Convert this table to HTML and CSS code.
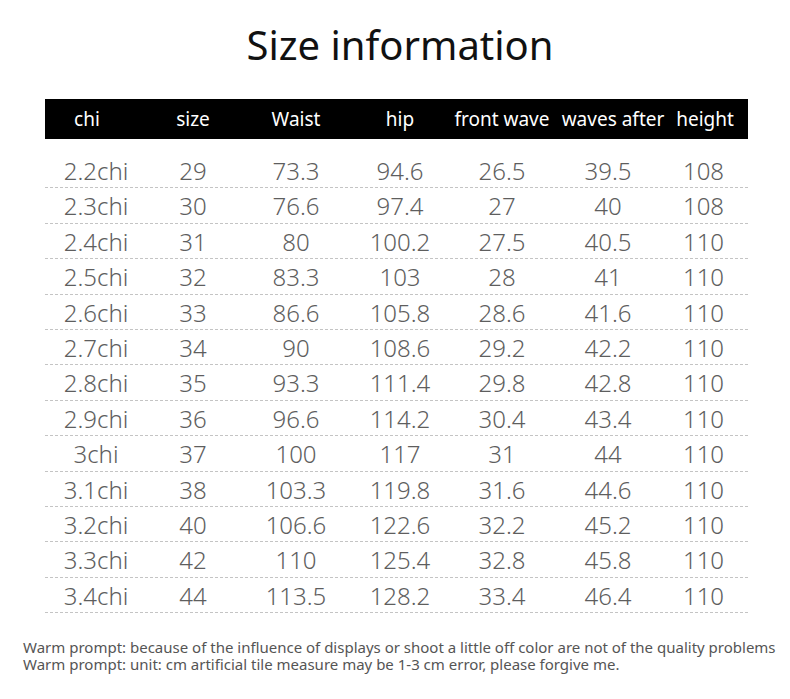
FILE: index.html
```html
<!DOCTYPE html>
<html>
<head>
<meta charset="utf-8">
<link rel="stylesheet" href="styles.css">
</head>
<body>
<div class="page">
  <h1 class="title">Size information</h1>
  <div class="table">
    <div class="head">
      <div class="hc h-chi">chi</div>
      <div class="hc">size</div>
      <div class="hc">Waist</div>
      <div class="hc">hip</div>
      <div class="hc">front wave</div>
      <div class="hc h-after">waves after</div>
      <div class="hc h-height">height</div>
    </div>
    <div class="rows">
      <div class="row"><div>2.2chi</div><div>29</div><div>73.3</div><div>94.6</div><div>26.5</div><div>39.5</div><div>108</div></div>
      <div class="row"><div>2.3chi</div><div>30</div><div>76.6</div><div>97.4</div><div>27</div><div>40</div><div>108</div></div>
      <div class="row"><div>2.4chi</div><div>31</div><div>80</div><div>100.2</div><div>27.5</div><div>40.5</div><div>110</div></div>
      <div class="row"><div>2.5chi</div><div>32</div><div>83.3</div><div>103</div><div>28</div><div>41</div><div>110</div></div>
      <div class="row"><div>2.6chi</div><div>33</div><div>86.6</div><div>105.8</div><div>28.6</div><div>41.6</div><div>110</div></div>
      <div class="row"><div>2.7chi</div><div>34</div><div>90</div><div>108.6</div><div>29.2</div><div>42.2</div><div>110</div></div>
      <div class="row"><div>2.8chi</div><div>35</div><div>93.3</div><div>111.4</div><div>29.8</div><div>42.8</div><div>110</div></div>
      <div class="row"><div>2.9chi</div><div>36</div><div>96.6</div><div>114.2</div><div>30.4</div><div>43.4</div><div>110</div></div>
      <div class="row"><div>3chi</div><div>37</div><div>100</div><div>117</div><div>31</div><div>44</div><div>110</div></div>
      <div class="row"><div>3.1chi</div><div>38</div><div>103.3</div><div>119.8</div><div>31.6</div><div>44.6</div><div>110</div></div>
      <div class="row"><div>3.2chi</div><div>40</div><div>106.6</div><div>122.6</div><div>32.2</div><div>45.2</div><div>110</div></div>
      <div class="row"><div>3.3chi</div><div>42</div><div>110</div><div>125.4</div><div>32.8</div><div>45.8</div><div>110</div></div>
      <div class="row"><div>3.4chi</div><div>44</div><div>113.5</div><div>128.2</div><div>33.4</div><div>46.4</div><div>110</div></div>
    </div>
  </div>
  <div class="note">
    <p>Warm prompt: because of the influence of displays or shoot a little off color are not of the quality problems</p>
    <p>Warm prompt: unit: cm artificial tile measure may be 1-3 cm error, please forgive me.</p>
  </div>
</div>
</body>
</html>
```
FILE: styles.css
```css
html, body {
  margin: 0;
  padding: 0;
  background: #ffffff;
}
.page {
  width: 790px;
  height: 699px;
  overflow: hidden;
  font-family: "Noto Sans", "Liberation Sans", sans-serif;
}
.title {
  margin: 0;
  padding-top: 20px;
  padding-left: 10px;
  height: 99px;
  box-sizing: border-box;
  text-align: center;
  font-size: 40px;
  line-height: 50px;
  font-weight: 400;
  color: #111111;
}
.table {
  margin-left: 45px;
  width: 703px;
}
.head, .row {
  display: grid;
  grid-template-columns: 102px 92px 114px 94px 110px 102px 89px;
  align-items: center;
  text-align: center;
}
.head {
  height: 40px;
  background: #000000;
  color: #ffffff;
  font-size: 19px;
  line-height: 40px;
  white-space: nowrap;
}
.h-chi { padding-right: 18px; }
.h-after { margin-right: -10px; }
.h-height { padding-left: 3px; }
.rows {
  margin-top: 14px;
}
.row {
  height: 35.4px;
  box-sizing: border-box;
  border-bottom: 1px dashed #c4c4c4;
  font-size: 24px;
  font-weight: 300;
  color: #5e5e5e;
  line-height: 36px;
}
.note {
  margin-top: 26px;
  margin-left: 23px;
  font-size: 15px;
  line-height: 17px;
  color: #555555;
  white-space: nowrap;
}
.note p {
  margin: 0;
}
```
